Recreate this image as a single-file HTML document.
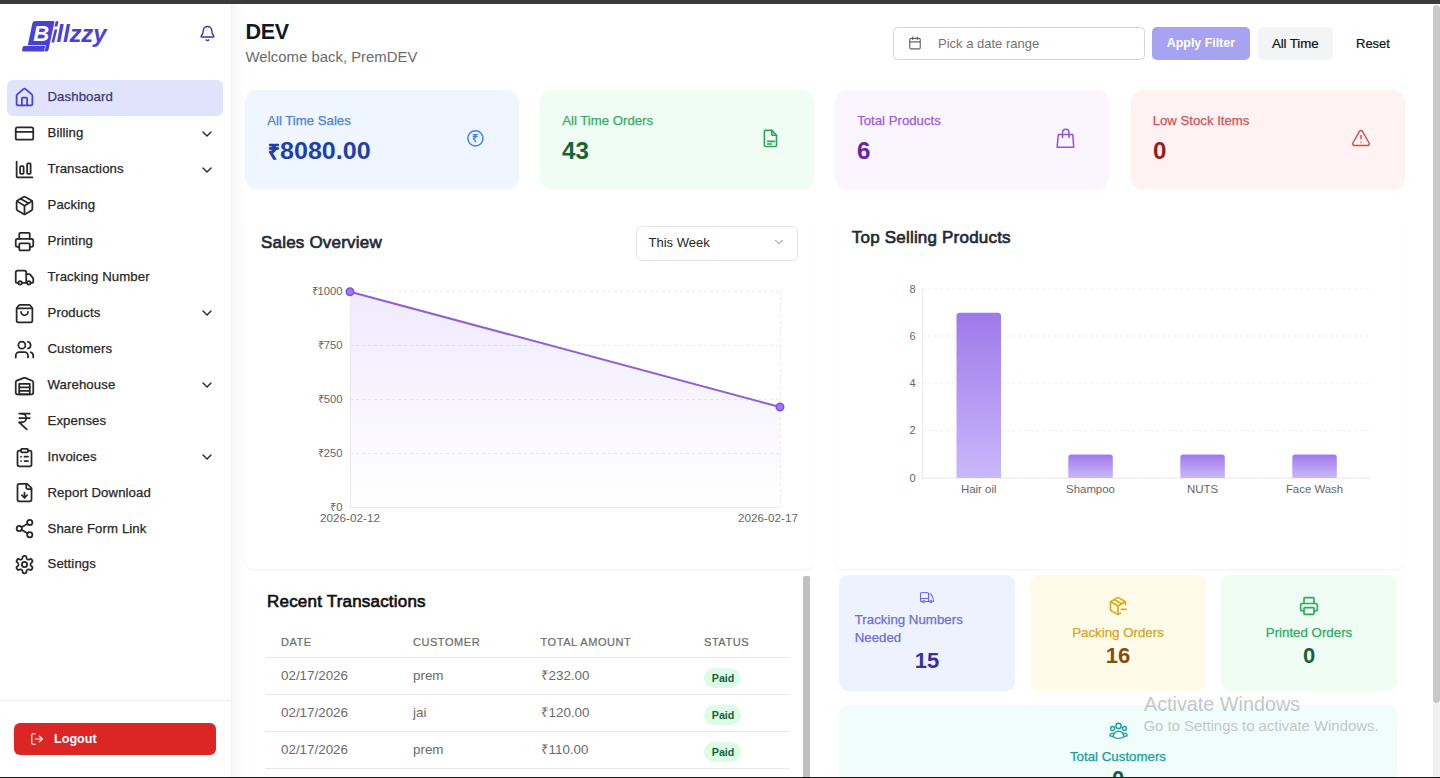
<!DOCTYPE html><html><head><meta charset="utf-8"><style>
*{box-sizing:border-box;margin:0;padding:0}
html,body{width:1440px;height:778px;overflow:hidden;background:#fff;font-family:"Liberation Sans",sans-serif;color:#1f2937}
.a{position:absolute;white-space:nowrap}
svg{display:block}
</style></head><body><div class="a" style="left:0px;top:0px;width:1440px;height:4px;background:#3a3a3a"></div>
<div class="a" style="left:230.5px;top:4px;width:1px;height:773px;background:#f1f1f1"></div>
<div class="a" style="left:231.5px;top:4px;width:14px;height:773px;background:linear-gradient(to right, rgba(0,0,0,0.03), rgba(0,0,0,0))"></div>
<svg class="a" style="left:18px;top:16px" width="95" height="40" viewBox="18 16 95 40">
<path d="M35.2 21 H53.2 Q54.6 21 54.3 22.4 L48.6 49.6 Q48.2 51.5 46.4 51.5 H44.6 L45.9 45.2 H27.8 L32.4 23.2 Q32.9 21 35.2 21 Z" fill="#4a41d8"/>
<path d="M24.4 45.9 H45.2 L44 51.6 H23.6 Q21.7 51.6 22.1 49.7 L22.7 47.3 Q23 45.9 24.4 45.9Z" fill="#4a41d8"/>
<text x="33.3" y="41.3" font-family="Liberation Sans" font-weight="700" font-style="italic" font-size="22" fill="#fff">B</text>
<path d="M54.6 29.6 H57.3 L54.1 42.4 H51.4 Z M55.7 21.3 H58.5 L57.3 26.5 H54.5 Z" fill="#4a41d8"/><text x="56.6" y="42.4" font-family="Liberation Sans" font-weight="700" font-style="italic" font-size="24" fill="#4a41d8" letter-spacing="-0.2">llzzy</text>
</svg>
<svg style="position:absolute;left:198.5px;top:24.5px"  width="17" height="17" viewBox="0 0 24 24" fill="none" stroke="#3b36a8" stroke-width="2" stroke-linecap="round" stroke-linejoin="round"><path d="M10.268 21a2 2 0 0 0 3.464 0"/><path d="M3.262 15.326A1 1 0 0 0 4 17h16a1 1 0 0 0 .74-1.673C19.41 13.956 18 12.499 18 8A6 6 0 0 0 6 8c0 4.499-1.411 5.956-2.738 7.326"/></svg>
<div class="a" style="left:7px;top:80.0px;width:216px;height:35.5px;background:#e0e3fb;border-radius:6px"></div>
<svg style="position:absolute;left:14.25px;top:87.22px"  width="21" height="21" viewBox="0 0 24 24" fill="none" stroke="#4a41d8" stroke-width="2" stroke-linecap="round" stroke-linejoin="round"><path d="M15 21v-8a1 1 0 0 0-1-1h-4a1 1 0 0 0-1 1v8"/><path d="M3 10a2 2 0 0 1 .709-1.528l7-5.999a2 2 0 0 1 2.582 0l7 5.999A2 2 0 0 1 21 10v9a2 2 0 0 1-2 2H5a2 2 0 0 1-2-2z"/></svg>
<div class="a" style="left:47.5px;top:90.40px;font-size:13.2px;line-height:13.2px;color:#38377a;font-weight:500;letter-spacing:0.1px;-webkit-text-stroke:0.25px #38377a">Dashboard</div>
<svg style="position:absolute;left:14.25px;top:123.15px"  width="21" height="21" viewBox="0 0 24 24" fill="none" stroke="#27272a" stroke-width="2" stroke-linecap="round" stroke-linejoin="round"><rect width="20" height="14" x="2" y="5" rx="2"/><line x1="2" x2="22" y1="10" y2="10"/></svg>
<div class="a" style="left:47.5px;top:126.33px;font-size:13.2px;line-height:13.2px;color:#27272a;font-weight:500;letter-spacing:0.1px;-webkit-text-stroke:0.25px #27272a">Billing</div>
<svg style="position:absolute;left:199px;top:125.65px"  width="16" height="16" viewBox="0 0 24 24" fill="none" stroke="#27272a" stroke-width="2" stroke-linecap="round" stroke-linejoin="round"><path d="m6 9 6 6 6-6"/></svg>
<svg style="position:absolute;left:14.25px;top:159.08px"  width="21" height="21" viewBox="0 0 24 24" fill="none" stroke="#27272a" stroke-width="2" stroke-linecap="round" stroke-linejoin="round"><path d="M3 3v16a2 2 0 0 0 2 2h16"/><rect x="15" y="5" width="4" height="12" rx="1"/><rect x="7" y="8" width="4" height="9" rx="1"/></svg>
<div class="a" style="left:47.5px;top:162.26px;font-size:13.2px;line-height:13.2px;color:#27272a;font-weight:500;letter-spacing:0.1px;-webkit-text-stroke:0.25px #27272a">Transactions</div>
<svg style="position:absolute;left:199px;top:161.58px"  width="16" height="16" viewBox="0 0 24 24" fill="none" stroke="#27272a" stroke-width="2" stroke-linecap="round" stroke-linejoin="round"><path d="m6 9 6 6 6-6"/></svg>
<svg style="position:absolute;left:14.25px;top:195.01px"  width="21" height="21" viewBox="0 0 24 24" fill="none" stroke="#27272a" stroke-width="2" stroke-linecap="round" stroke-linejoin="round"><path d="M11 21.73a2 2 0 0 0 2 0l7-4A2 2 0 0 0 21 16V8a2 2 0 0 0-1-1.73l-7-4a2 2 0 0 0-2 0l-7 4A2 2 0 0 0 3 8v8a2 2 0 0 0 1 1.73z"/><path d="M12 22V12"/><path d="m3.3 7 7.703 4.734a2 2 0 0 0 1.994 0L20.7 7"/><path d="m7.5 4.27 9 5.15"/></svg>
<div class="a" style="left:47.5px;top:198.19px;font-size:13.2px;line-height:13.2px;color:#27272a;font-weight:500;letter-spacing:0.1px;-webkit-text-stroke:0.25px #27272a">Packing</div>
<svg style="position:absolute;left:14.25px;top:230.94px"  width="21" height="21" viewBox="0 0 24 24" fill="none" stroke="#27272a" stroke-width="2" stroke-linecap="round" stroke-linejoin="round"><path d="M6 18H4a2 2 0 0 1-2-2v-5a2 2 0 0 1 2-2h16a2 2 0 0 1 2 2v5a2 2 0 0 1-2 2h-2"/><path d="M6 9V3a1 1 0 0 1 1-1h10a1 1 0 0 1 1 1v6"/><rect x="6" y="14" width="12" height="8" rx="1"/></svg>
<div class="a" style="left:47.5px;top:234.12px;font-size:13.2px;line-height:13.2px;color:#27272a;font-weight:500;letter-spacing:0.1px;-webkit-text-stroke:0.25px #27272a">Printing</div>
<svg style="position:absolute;left:14.25px;top:266.87px"  width="21" height="21" viewBox="0 0 24 24" fill="none" stroke="#27272a" stroke-width="2" stroke-linecap="round" stroke-linejoin="round"><path d="M14 18V6a2 2 0 0 0-2-2H4a2 2 0 0 0-2 2v11a1 1 0 0 0 1 1h2"/><path d="M15 18H9"/><path d="M19 18h2a1 1 0 0 0 1-1v-3.65a1 1 0 0 0-.22-.624l-3.48-4.35A1 1 0 0 0 17.52 8H14"/><circle cx="17" cy="18" r="2"/><circle cx="7" cy="18" r="2"/></svg>
<div class="a" style="left:47.5px;top:270.05px;font-size:13.2px;line-height:13.2px;color:#27272a;font-weight:500;letter-spacing:0.1px;-webkit-text-stroke:0.25px #27272a">Tracking Number</div>
<svg style="position:absolute;left:14.25px;top:302.8px"  width="21" height="21" viewBox="0 0 24 24" fill="none" stroke="#27272a" stroke-width="2" stroke-linecap="round" stroke-linejoin="round"><path d="M16 10a4 4 0 0 1-8 0"/><path d="M3.103 6.034h17.794"/><path d="M3.4 5.467a2 2 0 0 0-.4 1.2V20a2 2 0 0 0 2 2h14a2 2 0 0 0 2-2V6.667a2 2 0 0 0-.4-1.2l-2-2.667A2 2 0 0 0 17 2H7a2 2 0 0 0-1.6.8z"/></svg>
<div class="a" style="left:47.5px;top:305.98px;font-size:13.2px;line-height:13.2px;color:#27272a;font-weight:500;letter-spacing:0.1px;-webkit-text-stroke:0.25px #27272a">Products</div>
<svg style="position:absolute;left:199px;top:305.3px"  width="16" height="16" viewBox="0 0 24 24" fill="none" stroke="#27272a" stroke-width="2" stroke-linecap="round" stroke-linejoin="round"><path d="m6 9 6 6 6-6"/></svg>
<svg style="position:absolute;left:14.25px;top:338.73px"  width="21" height="21" viewBox="0 0 24 24" fill="none" stroke="#27272a" stroke-width="2" stroke-linecap="round" stroke-linejoin="round"><path d="M16 21v-2a4 4 0 0 0-4-4H6a4 4 0 0 0-4 4v2"/><circle cx="9" cy="7" r="4"/><path d="M22 21v-2a4 4 0 0 0-3-3.87"/><path d="M16 3.13a4 4 0 0 1 0 7.75"/></svg>
<div class="a" style="left:47.5px;top:341.91px;font-size:13.2px;line-height:13.2px;color:#27272a;font-weight:500;letter-spacing:0.1px;-webkit-text-stroke:0.25px #27272a">Customers</div>
<svg style="position:absolute;left:14.25px;top:374.66px"  width="21" height="21" viewBox="0 0 24 24" fill="none" stroke="#27272a" stroke-width="2" stroke-linecap="round" stroke-linejoin="round"><path d="M22 8.35V20a2 2 0 0 1-2 2H4a2 2 0 0 1-2-2V8.35A2 2 0 0 1 3.26 6.5l8-3.2a2 2 0 0 1 1.48 0l8 3.2A2 2 0 0 1 22 8.35Z"/><path d="M6 18h12"/><path d="M6 14h12"/><rect width="12" height="12" x="6" y="10"/></svg>
<div class="a" style="left:47.5px;top:377.84px;font-size:13.2px;line-height:13.2px;color:#27272a;font-weight:500;letter-spacing:0.1px;-webkit-text-stroke:0.25px #27272a">Warehouse</div>
<svg style="position:absolute;left:199px;top:377.16px"  width="16" height="16" viewBox="0 0 24 24" fill="none" stroke="#27272a" stroke-width="2" stroke-linecap="round" stroke-linejoin="round"><path d="m6 9 6 6 6-6"/></svg>
<svg style="position:absolute;left:14.25px;top:410.59px"  width="21" height="21" viewBox="0 0 24 24" fill="none" stroke="#27272a" stroke-width="2" stroke-linecap="round" stroke-linejoin="round"><path d="M6 3h12"/><path d="M6 8h12"/><path d="m6 13 8.5 8"/><path d="M6 13h3"/><path d="M9 13c6.667 0 6.667-10 0-10"/></svg>
<div class="a" style="left:47.5px;top:413.77px;font-size:13.2px;line-height:13.2px;color:#27272a;font-weight:500;letter-spacing:0.1px;-webkit-text-stroke:0.25px #27272a">Expenses</div>
<svg style="position:absolute;left:14.25px;top:446.52px"  width="21" height="21" viewBox="0 0 24 24" fill="none" stroke="#27272a" stroke-width="2" stroke-linecap="round" stroke-linejoin="round"><rect width="8" height="4" x="8" y="2" rx="1" ry="1"/><path d="M16 4h2a2 2 0 0 1 2 2v14a2 2 0 0 1-2 2H6a2 2 0 0 1-2-2V6a2 2 0 0 1 2-2h2"/><path d="M12 11h4"/><path d="M12 16h4"/><path d="M8 11h.01"/><path d="M8 16h.01"/></svg>
<div class="a" style="left:47.5px;top:449.70px;font-size:13.2px;line-height:13.2px;color:#27272a;font-weight:500;letter-spacing:0.1px;-webkit-text-stroke:0.25px #27272a">Invoices</div>
<svg style="position:absolute;left:199px;top:449.02px"  width="16" height="16" viewBox="0 0 24 24" fill="none" stroke="#27272a" stroke-width="2" stroke-linecap="round" stroke-linejoin="round"><path d="m6 9 6 6 6-6"/></svg>
<svg style="position:absolute;left:14.25px;top:482.45px"  width="21" height="21" viewBox="0 0 24 24" fill="none" stroke="#27272a" stroke-width="2" stroke-linecap="round" stroke-linejoin="round"><path d="M15 2H6a2 2 0 0 0-2 2v16a2 2 0 0 0 2 2h12a2 2 0 0 0 2-2V7Z"/><path d="M14 2v4a2 2 0 0 0 2 2h4"/><path d="M12 18v-6"/><path d="m9 15 3 3 3-3"/></svg>
<div class="a" style="left:47.5px;top:485.63px;font-size:13.2px;line-height:13.2px;color:#27272a;font-weight:500;letter-spacing:0.1px;-webkit-text-stroke:0.25px #27272a">Report Download</div>
<svg style="position:absolute;left:14.25px;top:518.38px"  width="21" height="21" viewBox="0 0 24 24" fill="none" stroke="#27272a" stroke-width="2" stroke-linecap="round" stroke-linejoin="round"><circle cx="18" cy="5" r="3"/><circle cx="6" cy="12" r="3"/><circle cx="18" cy="19" r="3"/><line x1="8.59" x2="15.42" y1="13.51" y2="17.49"/><line x1="15.41" x2="8.59" y1="6.51" y2="10.49"/></svg>
<div class="a" style="left:47.5px;top:521.56px;font-size:13.2px;line-height:13.2px;color:#27272a;font-weight:500;letter-spacing:0.1px;-webkit-text-stroke:0.25px #27272a">Share Form Link</div>
<svg style="position:absolute;left:14.25px;top:554.31px"  width="21" height="21" viewBox="0 0 24 24" fill="none" stroke="#27272a" stroke-width="2" stroke-linecap="round" stroke-linejoin="round"><path d="M12.22 2h-.44a2 2 0 0 0-2 2v.18a2 2 0 0 1-1 1.73l-.43.25a2 2 0 0 1-2 0l-.15-.08a2 2 0 0 0-2.73.73l-.22.38a2 2 0 0 0 .73 2.73l.15.1a2 2 0 0 1 1 1.72v.51a2 2 0 0 1-1 1.74l-.15.09a2 2 0 0 0-.73 2.73l.22.38a2 2 0 0 0 2.73.73l.15-.08a2 2 0 0 1 2 0l.43.25a2 2 0 0 1 1 1.73V20a2 2 0 0 0 2 2h.44a2 2 0 0 0 2-2v-.18a2 2 0 0 1 1-1.73l.43-.25a2 2 0 0 1 2 0l.15.08a2 2 0 0 0 2.73-.73l.22-.39a2 2 0 0 0-.73-2.73l-.15-.08a2 2 0 0 1-1-1.74v-.5a2 2 0 0 1 1-1.74l.15-.09a2 2 0 0 0 .73-2.73l-.22-.38a2 2 0 0 0-2.73-.73l-.15.08a2 2 0 0 1-2 0l-.43-.25a2 2 0 0 1-1-1.73V4a2 2 0 0 0-2-2z"/><circle cx="12" cy="12" r="3"/></svg>
<div class="a" style="left:47.5px;top:557.49px;font-size:13.2px;line-height:13.2px;color:#27272a;font-weight:500;letter-spacing:0.1px;-webkit-text-stroke:0.25px #27272a">Settings</div>
<div class="a" style="left:0px;top:700px;width:230px;height:1px;background:#ebebeb"></div>
<div class="a" style="left:14px;top:723px;width:202px;height:32px;background:#dc2626;border-radius:6px"></div>
<svg style="position:absolute;left:29.5px;top:732px"  width="14" height="14" viewBox="0 0 24 24" fill="none" stroke="#fff" stroke-width="2" stroke-linecap="round" stroke-linejoin="round"><path d="M9 21H5a2 2 0 0 1-2-2V5a2 2 0 0 1 2-2h4"/><polyline points="16 17 21 12 16 7"/><line x1="21" x2="9" y1="12" y2="12"/></svg>
<div class="a" style="left:54px;top:733.33px;font-size:12.6px;line-height:12.6px;color:#fff;font-weight:700;">Logout</div>
<div class="a" style="left:245.5px;top:21.50px;font-size:21.5px;line-height:21.5px;color:#111827;font-weight:700;letter-spacing:-0.3px">DEV</div>
<div class="a" style="left:245.5px;top:50.09px;font-size:14.9px;line-height:14.9px;color:#6b6b6b;font-weight:400;">Welcome back, PremDEV</div>
<div class="a" style="left:893px;top:27px;width:252px;height:32.5px;border:1px solid #d6d6d6;border-radius:4.5px;background:#fff"></div>
<svg style="position:absolute;left:908px;top:35.8px"  width="14" height="14" viewBox="0 0 24 24" fill="none" stroke="#666" stroke-width="2" stroke-linecap="round" stroke-linejoin="round"><path d="M8 2v4"/><path d="M16 2v4"/><rect width="18" height="18" x="3" y="4" rx="2"/><path d="M3 10h18"/></svg>
<div class="a" style="left:938px;top:36.80px;font-size:13px;line-height:13px;color:#737373;font-weight:400;">Pick a date range</div>
<div class="a" style="left:1152px;top:27px;width:98px;height:32.5px;background:#a7a2f2;border-radius:5px"></div>
<div class="a" style="left:1166.8px;top:37.30px;font-size:12.4px;line-height:12.4px;color:#fff;font-weight:700;">Apply Filter</div>
<div class="a" style="left:1257.7px;top:27px;width:75.3px;height:32.5px;background:#f3f4f6;border-radius:5px"></div>
<div class="a" style="left:1272px;top:37.24px;font-size:13.3px;line-height:13.3px;color:#111;font-weight:500;letter-spacing:-0.1px;-webkit-text-stroke:0.2px #111">All Time</div>
<div class="a" style="left:1356px;top:37.30px;font-size:13px;line-height:13px;color:#111;font-weight:400;-webkit-text-stroke:0.2px #111">Reset</div>
<div class="a" style="left:245px;top:90px;width:274px;height:98.5px;background:#eff6ff;border-radius:12px;box-shadow:0 1px 2px rgba(0,0,0,0.03)"></div>
<div class="a" style="left:267.2px;top:113.63px;font-size:13.2px;line-height:13.2px;color:#4a80da;font-weight:400;-webkit-text-stroke:0.25px #4a80da">All Time Sales</div>
<div class="a" style="left:267.8px;top:141.75px;font-size:20.5px;line-height:20.5px;color:#1e40af;font-weight:700;-webkit-text-stroke:0.3px #1e40af">&#8377;</div>
<div class="a" style="left:280.3px;top:139.63px;font-size:23px;line-height:23px;color:#1e40af;font-weight:700;transform:scaleX(1.09);transform-origin:0 0">8080.00</div>
<div class="a" style="left:540px;top:90px;width:274px;height:98.5px;background:#f0fdf4;border-radius:12px;box-shadow:0 1px 2px rgba(0,0,0,0.03)"></div>
<div class="a" style="left:562.2px;top:113.63px;font-size:13.2px;line-height:13.2px;color:#34ad62;font-weight:400;-webkit-text-stroke:0.25px #34ad62">All Time Orders</div>
<div class="a" style="left:562.4px;top:139.63px;font-size:23px;line-height:23px;color:#166534;font-weight:700;transform:scaleX(1.05);transform-origin:0 0">43</div>
<div class="a" style="left:835px;top:90px;width:274px;height:98.5px;background:#faf5ff;border-radius:12px;box-shadow:0 1px 2px rgba(0,0,0,0.03)"></div>
<div class="a" style="left:857.2px;top:113.63px;font-size:13.2px;line-height:13.2px;color:#a059d9;font-weight:400;-webkit-text-stroke:0.25px #a059d9">Total Products</div>
<div class="a" style="left:857.4px;top:139.63px;font-size:23px;line-height:23px;color:#6b21a8;font-weight:700;transform:scaleX(1.05);transform-origin:0 0">6</div>
<div class="a" style="left:1130.5px;top:90px;width:274px;height:98.5px;background:#fef2f2;border-radius:12px;box-shadow:0 1px 2px rgba(0,0,0,0.03)"></div>
<div class="a" style="left:1152.7px;top:113.63px;font-size:13.2px;line-height:13.2px;color:#cf5252;font-weight:400;-webkit-text-stroke:0.25px #cf5252">Low Stock Items</div>
<div class="a" style="left:1152.9px;top:139.63px;font-size:23px;line-height:23px;color:#991b1b;font-weight:700;transform:scaleX(1.05);transform-origin:0 0">0</div>
<svg class="a" style="left:466px;top:129px" width="19" height="19" viewBox="0 0 19 19"><circle cx="9.4" cy="9.3" r="7.6" fill="none" stroke="#3b82f6" stroke-width="1.5"/><text x="9.4" y="13.3" text-anchor="middle" font-family="Liberation Sans" font-weight="700" font-size="11" fill="#3b82f6">&#8377;</text></svg>
<svg class="a" style="left:756px;top:124px" width="30" height="30" viewBox="756 124 30 30" fill="none" stroke="#2ea25a" stroke-width="1.6" stroke-linecap="round" stroke-linejoin="round"><path d="M765.6 130.4 H771.8 L776.5 135.3 V145.3 Q776.5 146.5 775.3 146.5 H765.6 Q764.4 146.5 764.4 145.3 V131.6 Q764.4 130.4 765.6 130.4 Z"/><path d="M771.8 130.4 V134.2 Q771.8 135.3 772.9 135.3 H776.5"/><path d="M767.7 141.4 H774.6"/><path d="M767.7 144 H771.6"/></svg>
<svg class="a" style="left:1054px;top:126px" width="24" height="24" viewBox="1054 126 24 24" fill="none" stroke="#9a4fd8" stroke-width="1.5" stroke-linejoin="round" stroke-linecap="round"><path d="M1058.3 134.6 H1072.8 L1073.7 147.3 H1057.1 Z"/><path d="M1062.5 137.5 V132.5 Q1062.5 129.3 1065.7 129.3 Q1069 129.3 1069 132.5 V137.5"/></svg>
<svg style="position:absolute;left:1351px;top:127.5px"  width="20" height="20" viewBox="0 0 24 24" fill="none" stroke="#c85050" stroke-width="1.7" stroke-linecap="round" stroke-linejoin="round"><path d="m21.73 18-8-14a2 2 0 0 0-3.48 0l-8 14A2 2 0 0 0 4 21h16a2 2 0 0 0 1.73-3"/><path d="M12 9v4"/><path d="M12 17h.01"/></svg>
<div class="a" style="left:245px;top:216px;width:569px;height:352.5px;background:#fff;border-radius:8px;box-shadow:0 1px 2px rgba(0,0,0,0.06)"></div>
<div class="a" style="left:261px;top:234.11px;font-size:17px;line-height:17px;color:#1f2937;font-weight:400;-webkit-text-stroke:0.65px #1f2937;letter-spacing:0.2px">Sales Overview</div>
<div class="a" style="left:636px;top:225.5px;width:162px;height:35px;border:1px solid #e3e3e3;border-radius:6px;background:#fff"></div>
<div class="a" style="left:648.5px;top:235.70px;font-size:13px;line-height:13px;color:#262626;font-weight:400;">This Week</div>
<svg style="position:absolute;left:772px;top:235px"  width="14" height="14" viewBox="0 0 24 24" fill="none" stroke="#777" stroke-width="1.6" stroke-linecap="round" stroke-linejoin="round"><path d="m6 9 6 6 6-6"/></svg>
<svg class="a" style="left:0;top:0" width="1440" height="778"><defs><linearGradient id="ga" x1="0" y1="0" x2="0" y2="1"><stop offset="0" stop-color="#8b5cf6" stop-opacity="0.13"/><stop offset="1" stop-color="#8b5cf6" stop-opacity="0"/></linearGradient></defs><line x1="350" x2="780" y1="291.5" y2="291.5" stroke="#ebebeb" stroke-dasharray="3 3"/><line x1="350" x2="780" y1="345.5" y2="345.5" stroke="#ebebeb" stroke-dasharray="3 3"/><line x1="350" x2="780" y1="399.5" y2="399.5" stroke="#ebebeb" stroke-dasharray="3 3"/><line x1="350" x2="780" y1="453.5" y2="453.5" stroke="#ebebeb" stroke-dasharray="3 3"/><line x1="350" x2="780" y1="507.5" y2="507.5" stroke="#ebebeb" stroke-dasharray="3 3"/><line x1="350.5" x2="350.5" y1="291" y2="507" stroke="#ebebeb" stroke-dasharray="3 3"/><line x1="780.5" x2="780.5" y1="291" y2="507" stroke="#ebebeb" stroke-dasharray="3 3"/><path d="M350 291.7 L780 407 L780 507 L350 507 Z" fill="url(#ga)"/><line x1="350.5" x2="350.5" y1="291" y2="507" stroke="#e8e8e8"/><line x1="350" x2="780" y1="507.5" y2="507.5" stroke="#e8e8e8"/><path d="M350 291.7 L780 407" stroke="#8e5fd9" stroke-width="2" fill="none"/><circle cx="350" cy="291.7" r="3.7" fill="#9d7bef" stroke="#7f52e0" stroke-width="1.6"/><circle cx="780" cy="407" r="3.7" fill="#9d7bef" stroke="#7f52e0" stroke-width="1.6"/></svg>
<div class="a" style="left:42.5px;width:300px;text-align:right;top:286.02px;font-size:11.2px;line-height:11.2px;color:#666;font-weight:400;">&#8377;1000</div>
<div class="a" style="left:42.5px;width:300px;text-align:right;top:340.02px;font-size:11.2px;line-height:11.2px;color:#666;font-weight:400;">&#8377;750</div>
<div class="a" style="left:42.5px;width:300px;text-align:right;top:394.02px;font-size:11.2px;line-height:11.2px;color:#666;font-weight:400;">&#8377;500</div>
<div class="a" style="left:42.5px;width:300px;text-align:right;top:448.02px;font-size:11.2px;line-height:11.2px;color:#666;font-weight:400;">&#8377;250</div>
<div class="a" style="left:42.5px;width:300px;text-align:right;top:502.02px;font-size:11.2px;line-height:11.2px;color:#666;font-weight:400;">&#8377;0</div>
<div class="a" style="left:50px;width:600px;text-align:center;top:512.30px;font-size:11.7px;line-height:11.7px;color:#666;font-weight:400;">2026-02-12</div>
<div class="a" style="left:468px;width:600px;text-align:center;top:512.30px;font-size:11.7px;line-height:11.7px;color:#666;font-weight:400;">2026-02-17</div>
<div class="a" style="left:835px;top:216px;width:569px;height:352.5px;background:#fff;border-radius:8px;box-shadow:0 1px 2px rgba(0,0,0,0.06)"></div>
<div class="a" style="left:851.8px;top:228.91px;font-size:17px;line-height:17px;color:#1f2937;font-weight:400;-webkit-text-stroke:0.65px #1f2937;letter-spacing:0.2px">Top Selling Products</div>
<svg class="a" style="left:0;top:0" width="1440" height="778"><defs><linearGradient id="gb" x1="0" y1="0" x2="0" y2="1"><stop offset="0" stop-color="#9f7aea"/><stop offset="1" stop-color="#c9b8fb"/></linearGradient></defs><line x1="922" x2="1370" y1="289" y2="289" stroke="#ededed" stroke-dasharray="3 3"/><line x1="922" x2="1370" y1="336" y2="336" stroke="#ededed" stroke-dasharray="3 3"/><line x1="922" x2="1370" y1="383" y2="383" stroke="#ededed" stroke-dasharray="3 3"/><line x1="922" x2="1370" y1="430.5" y2="430.5" stroke="#ededed" stroke-dasharray="3 3"/><line x1="922" x2="1370" y1="478" y2="478" stroke="#ededed" stroke-dasharray="3 3"/><line x1="922.5" x2="922.5" y1="289" y2="478" stroke="#ececec"/><line x1="922" x2="1370" y1="478" y2="478" stroke="#ececec"/><path d="M956.5 478 V315.625 Q956.5 312.625 959.5 312.625 H998.0 Q1001.0 312.625 1001.0 315.625 V478 Z" fill="url(#gb)"/><path d="M1068.3 478 V457.375 Q1068.3 454.375 1071.3 454.375 H1109.8 Q1112.8 454.375 1112.8 457.375 V478 Z" fill="url(#gb)"/><path d="M1180.3 478 V457.375 Q1180.3 454.375 1183.3 454.375 H1221.8 Q1224.8 454.375 1224.8 457.375 V478 Z" fill="url(#gb)"/><path d="M1292.3 478 V457.375 Q1292.3 454.375 1295.3 454.375 H1333.8 Q1336.8 454.375 1336.8 457.375 V478 Z" fill="url(#gb)"/></svg>
<div class="a" style="left:615.5px;width:300px;text-align:right;top:283.69px;font-size:11px;line-height:11px;color:#666;font-weight:400;">8</div>
<div class="a" style="left:615.5px;width:300px;text-align:right;top:330.69px;font-size:11px;line-height:11px;color:#666;font-weight:400;">6</div>
<div class="a" style="left:615.5px;width:300px;text-align:right;top:377.69px;font-size:11px;line-height:11px;color:#666;font-weight:400;">4</div>
<div class="a" style="left:615.5px;width:300px;text-align:right;top:425.19px;font-size:11px;line-height:11px;color:#666;font-weight:400;">2</div>
<div class="a" style="left:615.5px;width:300px;text-align:right;top:472.69px;font-size:11px;line-height:11px;color:#666;font-weight:400;">0</div>
<div class="a" style="left:678.75px;width:600px;text-align:center;top:484.35px;font-size:11.4px;line-height:11.4px;color:#666;font-weight:400;">Hair oil</div>
<div class="a" style="left:790.5px;width:600px;text-align:center;top:484.35px;font-size:11.4px;line-height:11.4px;color:#666;font-weight:400;">Shampoo</div>
<div class="a" style="left:902.5px;width:600px;text-align:center;top:484.35px;font-size:11.4px;line-height:11.4px;color:#666;font-weight:400;">NUTS</div>
<div class="a" style="left:1014.5px;width:600px;text-align:center;top:484.35px;font-size:11.4px;line-height:11.4px;color:#666;font-weight:400;">Face Wash</div>
<div class="a" style="left:251px;top:576px;width:560px;height:210px;background:#fff;border-radius:8px;box-shadow:0 1px 2px rgba(0,0,0,0.05)"></div>
<div class="a" style="left:267px;top:592.81px;font-size:17px;line-height:17px;color:#111;font-weight:400;-webkit-text-stroke:0.65px #111;letter-spacing:0.2px">Recent Transactions</div>
<div class="a" style="left:281px;top:637.19px;font-size:11px;line-height:11px;color:#6b6b6b;font-weight:400;letter-spacing:0.05em;-webkit-text-stroke:0.2px #6b6b6b">DATE</div>
<div class="a" style="left:413px;top:637.19px;font-size:11px;line-height:11px;color:#6b6b6b;font-weight:400;letter-spacing:0.05em;-webkit-text-stroke:0.2px #6b6b6b">CUSTOMER</div>
<div class="a" style="left:540.5px;top:637.19px;font-size:11px;line-height:11px;color:#6b6b6b;font-weight:400;letter-spacing:0.05em;-webkit-text-stroke:0.2px #6b6b6b">TOTAL AMOUNT</div>
<div class="a" style="left:704px;top:637.19px;font-size:11px;line-height:11px;color:#6b6b6b;font-weight:400;letter-spacing:0.05em;-webkit-text-stroke:0.2px #6b6b6b">STATUS</div>
<div class="a" style="left:265px;top:657px;width:524px;height:1px;background:#e8e8e8"></div>
<div class="a" style="left:281px;top:669.46px;font-size:13.4px;line-height:13.4px;color:#6b6b6b;font-weight:400;">02/17/2026</div>
<div class="a" style="left:413px;top:669.46px;font-size:13.4px;line-height:13.4px;color:#6b6b6b;font-weight:400;">prem</div>
<div class="a" style="left:540.5px;top:669.46px;font-size:13.4px;line-height:13.4px;color:#6b6b6b;font-weight:400;">&#8377;232.00</div>
<div class="a" style="left:704px;top:668px;width:37px;height:19.5px;background:#dcfce7;border-radius:10px"></div>
<div class="a" style="left:711.8px;top:673.14px;font-size:10.7px;line-height:10.7px;color:#1b5e36;font-weight:700;">Paid</div>
<div class="a" style="left:265px;top:694px;width:524px;height:1px;background:#e8e8e8"></div>
<div class="a" style="left:281px;top:706.46px;font-size:13.4px;line-height:13.4px;color:#6b6b6b;font-weight:400;">02/17/2026</div>
<div class="a" style="left:413px;top:706.46px;font-size:13.4px;line-height:13.4px;color:#6b6b6b;font-weight:400;">jai</div>
<div class="a" style="left:540.5px;top:706.46px;font-size:13.4px;line-height:13.4px;color:#6b6b6b;font-weight:400;">&#8377;120.00</div>
<div class="a" style="left:704px;top:705px;width:37px;height:19.5px;background:#dcfce7;border-radius:10px"></div>
<div class="a" style="left:711.8px;top:710.14px;font-size:10.7px;line-height:10.7px;color:#1b5e36;font-weight:700;">Paid</div>
<div class="a" style="left:265px;top:731px;width:524px;height:1px;background:#e8e8e8"></div>
<div class="a" style="left:281px;top:743.46px;font-size:13.4px;line-height:13.4px;color:#6b6b6b;font-weight:400;">02/17/2026</div>
<div class="a" style="left:413px;top:743.46px;font-size:13.4px;line-height:13.4px;color:#6b6b6b;font-weight:400;">prem</div>
<div class="a" style="left:540.5px;top:743.46px;font-size:13.4px;line-height:13.4px;color:#6b6b6b;font-weight:400;">&#8377;110.00</div>
<div class="a" style="left:704px;top:742px;width:37px;height:19.5px;background:#dcfce7;border-radius:10px"></div>
<div class="a" style="left:711.8px;top:747.14px;font-size:10.7px;line-height:10.7px;color:#1b5e36;font-weight:700;">Paid</div>
<div class="a" style="left:265px;top:768px;width:524px;height:1px;background:#e8e8e8"></div>
<div class="a" style="left:803px;top:575.5px;width:7px;height:202px;background:#c1c1c1;border-radius:1.5px"></div>
<div class="a" style="left:839px;top:575px;width:176px;height:116px;background:#eef2ff;border-radius:9px"></div>
<svg style="position:absolute;left:919px;top:589px"  width="16" height="16" viewBox="0 0 24 24" fill="none" stroke="#6366f1" stroke-width="1.6" stroke-linecap="round" stroke-linejoin="round"><path d="M8.25 18.75a1.5 1.5 0 0 1-3 0m3 0a1.5 1.5 0 0 0-3 0m3 0h6m-9 0H3.375a1.125 1.125 0 0 1-1.125-1.125V14.25m17.25 4.5a1.5 1.5 0 0 1-3 0m3 0a1.5 1.5 0 0 0-3 0m3 0h1.125c.621 0 1.129-.504 1.09-1.124a17.902 17.902 0 0 0-3.213-9.193 2.056 2.056 0 0 0-1.58-.86H14.25M16.5 18.75h-2.25m0-11.177v-.958c0-.568-.422-1.048-.987-1.106a48.554 48.554 0 0 0-10.026 0 1.106 1.106 0 0 0-.987 1.106v7.635m12-6.677v6.677m0 4.5v-4.5m0 0h-12"/></svg>
<div class="a" style="left:854.7px;top:612.54px;font-size:13.3px;line-height:13.3px;color:#6d6fd1;font-weight:500;-webkit-text-stroke:0.25px #6d6fd1">Tracking Numbers</div>
<div class="a" style="left:854.7px;top:631.24px;font-size:13.3px;line-height:13.3px;color:#6d6fd1;font-weight:500;-webkit-text-stroke:0.25px #6d6fd1">Needed</div>
<div class="a" style="left:627px;width:600px;text-align:center;top:650.18px;font-size:22px;line-height:22px;color:#3730a3;font-weight:700;">15</div>
<div class="a" style="left:1030px;top:575px;width:175.5px;height:116px;background:#fefce8;border-radius:9px"></div>
<svg style="position:absolute;left:1108px;top:595.5px"  width="20" height="20" viewBox="0 0 24 24" fill="none" stroke="#dcab14" stroke-width="2" stroke-linecap="round" stroke-linejoin="round"><path d="M16 16h6"/><path d="M21 10V8a2 2 0 0 0-1-1.73l-7-4a2 2 0 0 0-2 0l-7 4A2 2 0 0 0 3 8v8a2 2 0 0 0 1 1.73l7 4a2 2 0 0 0 2 0l2-1.14"/><path d="m7.5 4.27 9 5.15"/><polyline points="3.29 7 12 12 20.71 7"/><line x1="12" x2="12" y1="22" y2="12"/></svg>
<div class="a" style="left:818px;width:600px;text-align:center;top:625.54px;font-size:13.3px;line-height:13.3px;color:#d6a41c;font-weight:500;-webkit-text-stroke:0.25px #d6a41c">Packing Orders</div>
<div class="a" style="left:818px;width:600px;text-align:center;top:645.18px;font-size:22px;line-height:22px;color:#854d0e;font-weight:700;">16</div>
<div class="a" style="left:1221px;top:575px;width:175.5px;height:116px;background:#f0fdf4;border-radius:9px"></div>
<svg style="position:absolute;left:1299px;top:595.7px"  width="20" height="20" viewBox="0 0 24 24" fill="none" stroke="#27ad5c" stroke-width="2" stroke-linecap="round" stroke-linejoin="round"><path d="M6 18H4a2 2 0 0 1-2-2v-5a2 2 0 0 1 2-2h16a2 2 0 0 1 2 2v5a2 2 0 0 1-2 2h-2"/><path d="M6 9V3a1 1 0 0 1 1-1h10a1 1 0 0 1 1 1v6"/><rect x="6" y="14" width="12" height="8" rx="1"/></svg>
<div class="a" style="left:1009px;width:600px;text-align:center;top:625.54px;font-size:13.3px;line-height:13.3px;color:#27ad5c;font-weight:500;-webkit-text-stroke:0.25px #27ad5c">Printed Orders</div>
<div class="a" style="left:1009px;width:600px;text-align:center;top:645.18px;font-size:22px;line-height:22px;color:#166534;font-weight:700;">0</div>
<div class="a" style="left:839px;top:705px;width:557.5px;height:120px;background:#f0fdfa;border-radius:9px"></div>
<svg style="position:absolute;left:1107.5px;top:719.5px"  width="21" height="21" viewBox="0 0 24 24" fill="none" stroke="#14a097" stroke-width="1.6" stroke-linecap="round" stroke-linejoin="round"><path d="M18 18.72a9.094 9.094 0 0 0 3.741-.479 3 3 0 0 0-4.682-2.72m.94 3.198.001.031c0 .225-.012.447-.037.666A11.944 11.944 0 0 1 12 21c-2.17 0-4.207-.576-5.963-1.584A6.062 6.062 0 0 1 6 18.719m12 0a5.971 5.971 0 0 0-.941-3.197m0 0A5.995 5.995 0 0 0 12 12.75a5.995 5.995 0 0 0-5.058 2.772m0 0a3 3 0 0 0-4.681 2.72 8.986 8.986 0 0 0 3.74.477m.94-3.197a5.971 5.971 0 0 0-.94 3.197M15 6.75a3 3 0 1 1-6 0 3 3 0 0 1 6 0Zm6 3a2.25 2.25 0 1 1-4.5 0 2.25 2.25 0 0 1 4.5 0Zm-13.5 0a2.25 2.25 0 1 1-4.5 0 2.25 2.25 0 0 1 4.5 0Z"/></svg>
<div class="a" style="left:818px;width:600px;text-align:center;top:749.54px;font-size:13.3px;line-height:13.3px;color:#14a097;font-weight:500;-webkit-text-stroke:0.25px #14a097">Total Customers</div>
<div class="a" style="left:818px;width:600px;text-align:center;top:767.88px;font-size:22px;line-height:22px;color:#115e59;font-weight:700;">0</div>
<div class="a" style="left:1144px;top:694.84px;font-size:19.8px;line-height:19.8px;color:rgba(150,150,150,0.55);font-weight:400;">Activate Windows</div>
<div class="a" style="left:1143.5px;top:719.49px;font-size:14.9px;line-height:14.9px;color:rgba(150,150,150,0.55);font-weight:400;">Go to Settings to activate Windows.</div>
<div class="a" style="left:1433px;top:703px;width:7px;height:74px;background:#f1f1f1"></div>
<div class="a" style="left:1433px;top:5px;width:7px;height:698px;background:#c8c8c8;border-radius:4px"></div>
<div class="a" style="left:0px;top:777px;width:1440px;height:1px;background:#151515"></div></body></html>
